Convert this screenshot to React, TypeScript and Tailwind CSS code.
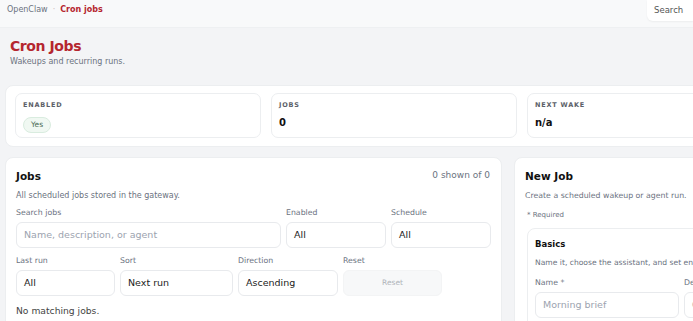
export default function App() {
  return (
    <div className="w-[693px] h-[321px] overflow-hidden bg-[#f3f4f6] font-['DejaVu_Sans',sans-serif] text-[#1f2328]">
      {/* Top bar */}
      <header className="h-[28px] w-[693px] bg-[#f8f9fa] border-b border-[#eef0f2] flex items-start justify-between">
        <div className="flex items-center gap-[5px] pl-[7px] pt-[4px] text-[8px] leading-[12px]">
          <span className="text-[#6b7280]">OpenClaw</span>
          <span className="text-[#c9b8bb]">·</span>
          <span className="font-bold text-[#b5262f]">Cron jobs</span>
        </div>
        <div className="h-[21px] w-[46px] bg-white rounded-bl-[6px] shadow-[0_1px_2px_rgba(0,0,0,0.05)] pl-[7px] pt-[4px] text-[8.5px] leading-[12px] text-[#555]">
          Search
        </div>
      </header>

      <div className="w-[820px] px-[5px]">
        {/* Page title */}
        <div className="px-[5px] pt-[9px] h-[57px]">
          <h1 className="text-[14px] leading-[18px] font-bold tracking-[-0.03em] text-[#b5262f]">Cron Jobs</h1>
          <p className="mt-[2px] text-[8px] leading-[10px] text-[#6b7280]">Wakeups and recurring runs.</p>
        </div>

        {/* Stats */}
        <div className="h-[62px] bg-white rounded-[8px] border border-[#eceef0] px-[9px] pt-[7px] flex gap-[10px]">
          <StatCard label="ENABLED">
            <span className="inline-block mt-[1px] px-[7px] h-[16px] leading-[14px] rounded-full border border-[#d9ecdf] bg-[#f0f8f2] text-[7.5px] text-[#4b6b55]">
              Yes
            </span>
          </StatCard>
          <StatCard label="JOBS">
            <div className="mt-[7px] text-[10px] leading-[12px] font-bold text-[#111]">0</div>
          </StatCard>
          <StatCard label="NEXT WAKE">
            <div className="mt-[7px] text-[10px] leading-[12px] font-bold text-[#111]">n/a</div>
          </StatCard>
        </div>

        {/* Panels */}
        <div className="mt-[10px] flex gap-[12px]">
          {/* Jobs */}
          <div className="w-[497px] h-[180px] shrink-0 bg-white rounded-[8px] border border-[#eceef0] px-[10px] pt-[11px]">
            <div className="flex items-center justify-between">
              <h2 className="text-[10.5px] leading-[14px] font-bold text-[#111]">Jobs</h2>
              <span className="pr-[1px] text-[9px] text-[#6b7280]">0 shown of 0</span>
            </div>
            <p className="mt-[8px] text-[8px] leading-[10px] text-[#6b7280]">All scheduled jobs stored in the gateway.</p>

            <div className="mt-[7px] flex gap-[5px]">
              <Field label="Search jobs" className="w-[265px]">
                <Input placeholder="Name, description, or agent" />
              </Field>
              <Field label="Enabled" className="w-[100px]">
                <Input value="All" />
              </Field>
              <Field label="Schedule" className="w-[100px]">
                <Input value="All" />
              </Field>
            </div>
            <div className="mt-[8px] flex gap-[5px]">
              <Field label="Last run" className="w-[99px]">
                <Input value="All" />
              </Field>
              <Field label="Sort" className="w-[113px]">
                <Input value="Next run" />
              </Field>
              <Field label="Direction" className="w-[100px]">
                <Input value="Ascending" />
              </Field>
              <Field label="Reset" className="w-[99px]">
                <div className="h-[26px] rounded-[6px] border border-[#f3f4f5] bg-[#f7f8f9] flex items-center justify-center text-[7.5px] text-[#b0b4ba]">
                  Reset
                </div>
              </Field>
            </div>
            <p className="mt-[9px] text-[9.2px] leading-[12px] text-[#444]">No matching jobs.</p>
          </div>

          {/* New Job */}
          <div className="w-[300px] h-[180px] shrink-0 bg-white rounded-[8px] border border-[#eceef0] px-[10px] pt-[11px]">
            <h2 className="text-[10.5px] leading-[14px] font-bold text-[#111]">New Job</h2>
            <p className="mt-[8px] text-[7.8px] leading-[10px] text-[#6b7280]">Create a scheduled wakeup or agent run.</p>
            <p className="mt-[9px] pl-[2px] text-[7px] leading-[10px] text-[#6b7280]">* Required</p>
            <div className="mt-[8px] ml-[2px] h-[120px] rounded-[8px] border border-[#eceef0] px-[7px] pt-[10px]">
              <h3 className="text-[8.5px] leading-[11px] font-bold text-[#111]">Basics</h3>
              <p className="mt-[8px] text-[7.6px] leading-[10px] text-[#6b7280] whitespace-nowrap">
                Name it, choose the assistant, and set enabled state.
              </p>
              <div className="mt-[10px] flex gap-[5px]">
                <Field label="Name *" className="w-[144px] shrink-0">
                  <Input placeholder="Morning brief" />
                </Field>
                <Field label="Description" className="w-[144px] shrink-0">
                  <Input placeholder="Optional" />
                </Field>
              </div>
            </div>
          </div>
        </div>
      </div>
    </div>
  );
}

function StatCard({ label, children }: { label: string; children: React.ReactNode }) {
  return (
    <div className="w-[246px] h-[45px] shrink-0 rounded-[7px] border border-[#eceef0] px-[7px] pt-[7px]">
      <div className="text-[6.5px] leading-[9px] font-bold tracking-[0.12em] text-[#5b6068]">{label}</div>
      {children}
    </div>
  );
}

function Field({ label, className, children }: { label: string; className?: string; children: React.ReactNode }) {
  return (
    <div className={className}>
      <div className="text-[7.8px] leading-[10px] text-[#6b7280] mb-[4px] whitespace-nowrap">{label}</div>
      {children}
    </div>
  );
}

function Input({ value, placeholder }: { value?: string; placeholder?: string }) {
  return (
    <div className="h-[26px] rounded-[6px] border border-[#e8eaed] bg-white px-[7px] flex items-center text-[9.5px] whitespace-nowrap overflow-hidden">
      {value ? <span className="text-[#222]">{value}</span> : <span className="text-[#9ca3af]">{placeholder}</span>}
    </div>
  );
}
